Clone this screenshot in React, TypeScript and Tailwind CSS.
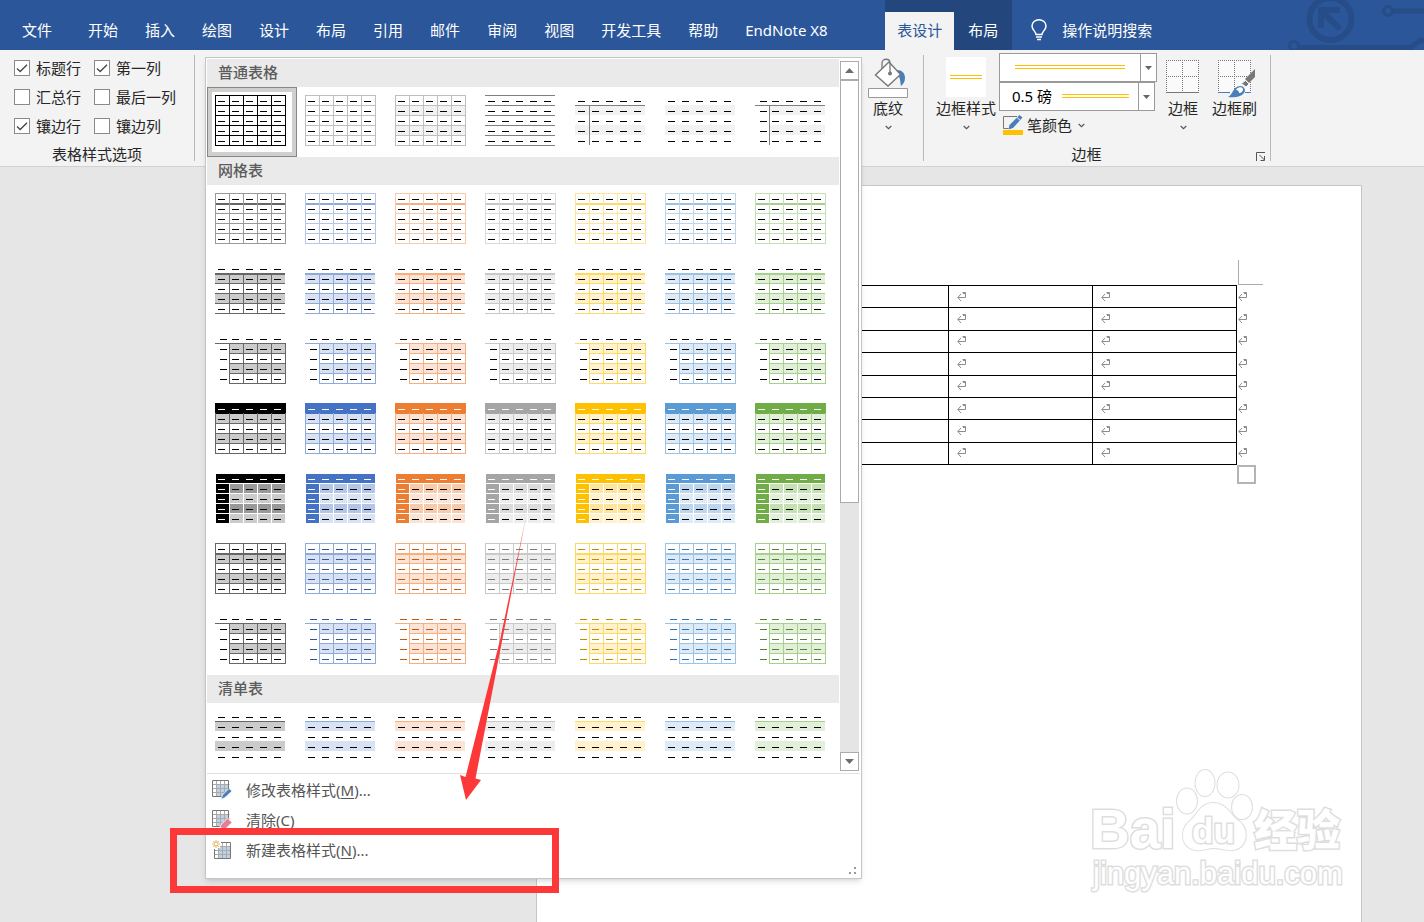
import React from 'react';

type Theme = { base: string; mid: string; light: string; pale: string; dark: string };
type Kind =
	| 'plainGrid'
	| 'plainGray'
	| 'plainBanded'
	| 'plainLines'
	| 'plainFirstCol'
	| 'plainBands'
	| 'plainIndent'
	| 'grid1'
	| 'grid2'
	| 'grid3'
	| 'grid4'
	| 'grid5'
	| 'grid6'
	| 'grid7'
	| 'list1';

const themes: Theme[] = [
	{ base: '#000000', mid: '#666666', light: '#999999', pale: '#cbcbcb', dark: '#000000' },
	{ base: '#4472c4', mid: '#8eaadb', light: '#b4c6e7', pale: '#d9e2f3', dark: '#2f5496' },
	{ base: '#ed7d31', mid: '#f4b083', light: '#f7caac', pale: '#fbe4d5', dark: '#c45911' },
	{ base: '#a5a5a5', mid: '#c9c9c9', light: '#dbdbdb', pale: '#ededed', dark: '#7b7b7b' },
	{ base: '#ffc000', mid: '#ffd966', light: '#ffe599', pale: '#fff2cc', dark: '#bf8f00' },
	{ base: '#5b9bd5', mid: '#9cc2e5', light: '#bdd6ee', pale: '#deeaf6', dark: '#2e74b5' },
	{ base: '#70ad47', mid: '#a8d08d', light: '#c5e0b3', pale: '#e2efd9', dark: '#538135' },
];

const plainKinds: Kind[] = [
	'plainGrid',
	'plainGray',
	'plainBanded',
	'plainLines',
	'plainFirstCol',
	'plainBands',
	'plainIndent',
];
const gridKinds: Kind[] = ['grid1', 'grid2', 'grid3', 'grid4', 'grid5', 'grid6', 'grid7'];
const steps = [0, 1, 2, 3, 4];

const Preview = ({ kind, theme }: { kind: Kind; theme: Theme }) => {
	const shapes: React.ReactElement[] = [];
	const box = (x: number, y: number, w: number, h: number, fill: string) =>
		shapes.push(<rect key={shapes.length} x={x} y={y} width={w} height={h} fill={fill} />);
	const bands = (fill: string, x = 0) => [10, 30].forEach((y) => box(x, y, 70 - x, 10, fill));
	const rows = (ys: number[], fill: string, x = 0, end = 70) => ys.forEach((y) => box(x, y, end - x, 1, fill));
	const cols = (xs: number[], fill: string, y = 0) => xs.forEach((x) => box(x, y, 1, 51 - y, fill));
	const allX = [0, 14, 28, 42, 56, 70];
	const allY = [0, 10, 20, 30, 40, 50];
	const indent = kind === 'plainIndent' || kind === 'grid3' || kind === 'grid7';
	let dash = '#000000';

	switch (kind) {
		case 'plainGrid':
			rows(allY, '#000000');
			cols(allX, '#000000');
			break;
		case 'plainBanded':
		case 'plainGray':
			if (kind === 'plainBanded') bands('#f2f2f2');
			rows(allY, '#bfbfbf');
			cols(allX, '#bfbfbf');
			break;
		case 'plainLines':
			rows(allY, '#7f7f7f');
			break;
		case 'plainBands':
			bands('#f2f2f2');
			break;
		case 'plainFirstCol':
		case 'plainIndent':
			bands('#f2f2f2', indent ? 14 : 0);
			rows([10], '#7f7f7f');
			box(14, 10, 1, 40, '#7f7f7f');
			break;
		case 'grid1':
			rows(allY, theme.light);
			box(0, 10, 70, 2, theme.mid);
			cols(allX, theme.light);
			break;
		case 'grid2':
			bands(theme.pale);
			rows([20, 30, 40, 50], theme.mid);
			box(0, 10, 70, 2, theme.mid);
			[14, 28, 42, 56].forEach((x) => box(x, 10, 1, 40, theme.mid));
			break;
		case 'grid3':
		case 'grid7':
			bands(theme.pale, 14);
			rows([10], theme.mid);
			rows([20, 30, 40, 50], theme.mid, 14);
			cols([14, 28, 42, 56, 70], theme.mid, 10);
			break;
		case 'grid4':
			bands(theme.pale);
			box(0, 0, 71, 11, theme.base);
			rows([20, 30, 40, 50], theme.mid);
			cols(allX, theme.mid, 10);
			break;
		case 'grid5':
			box(1, 1, 69, 9, theme.base);
			[1, 2, 3, 4].forEach((r) => {
				box(1, r * 10 + 1, 13, 9, theme.base);
				[1, 2, 3, 4].forEach((c) =>
					box(c * 14 + 1, r * 10 + 1, 13, 9, r % 2 ? theme.light : theme.pale)
				);
			});
			break;
		case 'grid6':
			bands(theme.pale);
			rows(allY, theme.mid);
			box(0, 10, 70, 2, theme.mid);
			cols(allX, theme.mid);
			break;
		case 'list1':
			bands(theme.pale);
			rows([10], theme.mid);
			break;
	}
	if (kind === 'grid6' || kind === 'grid7') dash = theme.dark;

	steps.forEach((r) =>
		steps.forEach((c) => {
			const white = (kind === 'grid4' && r === 0) || (kind === 'grid5' && (r === 0 || c === 0));
			box(c * 14 + 3 + (indent && c === 0 ? 2 : 0), r * 10 + 6, 7, 1, white ? '#ffffff' : dash);
		})
	);

	return (
		<svg width="71" height="51" viewBox="0 0 71 51" shapeRendering="crispEdges">
			{shapes}
		</svg>
	);
};

const StyleButton = ({ kind, theme, selected }: { kind: Kind; theme: Theme; selected?: boolean }) => (
	<button
		aria-label={kind}
		className={
			selected
				? 'h-[70px] w-[90px] border border-[#868884] bg-[#cfcfcd] p-1'
				: 'h-[70px] w-[90px] p-[5px] hover:bg-gray-200'
		}
	>
		<span className="flex h-full bg-white pt-[3px] pl-[3px]">
			<Preview kind={kind} theme={theme} />
		</span>
	</button>
);

const SectionTitle = ({ children }: { children: string }) => (
	<h2 className="h-7 bg-[#eaeaea] pl-[11px] leading-[26px] font-medium text-[#5c5c5c]">{children}</h2>
);

const Chevron = () => (
	<svg width="7" height="5" viewBox="0 0 7 5" fill="none" stroke="#555" strokeWidth="1.2">
		<path d="M.7 1l2.8 2.6L6.3 1" />
	</svg>
);

const CheckOption = ({ label, checked }: { label: string; checked?: boolean }) => (
	<label className="flex items-center gap-[6px]">
		<span className="relative flex">
			<input
				type="checkbox"
				defaultChecked={checked}
				className="peer h-4 w-4 appearance-none border border-[#8a8a8a] bg-white"
			/>
			<svg
				className="pointer-events-none absolute inset-0 hidden peer-checked:block"
				width="16"
				height="16"
				viewBox="0 0 16 16"
				fill="none"
				stroke="#444"
				strokeWidth="1.3"
			>
				<path d="M3 8.5l3.2 3L13 4.8" />
			</svg>
		</span>
		{label}
	</label>
);

const BucketIcon = () => (
	<svg width="40" height="40" viewBox="0 0 40 40" fill="none">
		<path d="M29 12c5 0 8 3 8 8 0 4-2 6-4 8-1-4 0-8-4-12z" fill="#4a7ebb" />
		<path d="M21 4L32.500 16.500 20 28 7.500 17z" fill="#fff" stroke="#777" strokeWidth="1.4" />
		<path d="M14 11V5c0-5 8-5 8 0v10" stroke="#777" strokeWidth="1.3" />
		<circle cx="22" cy="15.500" r="2" fill="#777" />
		<path d="M.5 30.500h39v9H.5z" fill="#fff" stroke="#999" />
	</svg>
);

const BorderIcon = () => (
	<svg width="34" height="34" viewBox="0 0 34 34" fill="none" shapeRendering="crispEdges">
		<path d="M0 0h33v33H0z" fill="#fafafa" />
		<path d="M0 .5h33M0 16.500h33M.5 0v32M16.500 0v32M32.500 0v32" stroke="#777" strokeDasharray="1 1" />
		<path d="M0 32.500h33" stroke="#777" />
	</svg>
);

const BorderBrushIcon = () => (
	<svg width="38" height="38" viewBox="0 0 38 38" fill="none">
		<path d="M0 0h33v33H0z" fill="#fafafa" />
		<path
			d="M0 .5h33M0 16.500h33M.5 0v32M16.500 0v32M32.500 0v32"
			stroke="#777"
			strokeDasharray="1 1"
			shapeRendering="crispEdges"
		/>
		<path d="M0 32.500h12M27 32.500h6" stroke="#4a7ebb" />
		<path d="M37 9v8l-6 6-4-4z" fill="#777" />
		<path d="M27.500 20.500l3.500 3.500-3 3-4.500-3.500z" fill="#777" stroke="#f3f3f3" />
		<path d="M10 37c5-2 5-11 12-11 5 0 6 5 4 7-3 4-9 5-16 4z" fill="#4a7ebb" />
		<path d="M18 30c1-3 6-4 7-1 0 3-2 4-4 4 0-2-1-3-3-3z" fill="#fff" />
	</svg>
);

const PenColorIcon = () => (
	<svg width="20" height="20" viewBox="0 0 20 20" fill="none">
		<path d="M14 1.500H.5v12h5" stroke="#777" />
		<path d="M16.500 0l3 2.500L10 13l-4.500 1.500 1-4.500z" fill="#4a7ebb" />
		<path d="M14 2.500l3.500 3" stroke="#f3f3f3" />
		<path d="M0 15h20v5H0z" fill="#ffc000" />
	</svg>
);

const GridIcon = ({ variant }: { variant: 'edit' | 'clear' | 'new' }) => (
	<svg width="20" height="20" viewBox="0 0 20 20" fill="none">
		{variant === 'new' ? (
			<>
				<path d="M2.500 2.500h16v16h-16z" fill="#fff" />
				<path d="M6 6h12v12H6z" fill="#bdd0e5" />
				<path d="M2.500 6.500h16M2.500 10.500h16M2.500 14.500h16M6.500 2v16M10.500 2v16M14.500 2v16" stroke="#aaa" />
				<path d="M2.500 9v9.500h16v-16H9" stroke="#777" />
				<path d="M0 0h8v8H0z" fill="#fff" />
				<path d="M4 0v8M0 4h8M1.200 1.200l5.600 5.600M6.800 1.200L1.200 6.800" stroke="#e8bd6c" strokeWidth="1.2" />
				<circle cx="4" cy="4" r="1.200" fill="#fff" />
			</>
		) : (
			<>
				<path d="M.5 .5h17v16H.5z" fill="#fff" />
				<path d="M5 5h11v11H5z" fill="#bdd0e5" />
				<path d="M.5 4.500h17M.5 8.500h17M.5 12.500h17M4.500 0v17M8.500 0v17M12.500 0v17" stroke="#aaa" />
				<path d="M10 16.500H.5V.5h16V10" stroke="#777" />
			</>
		)}
		{variant === 'edit' && (
			<path d="M17 8.500l3 2.500-7 6.500-4 2 1.500-4.500z" fill="#4a7ebb" stroke="#fff" strokeWidth=".7" />
		)}
		{variant === 'clear' && (
			<path d="M15.500 8l4.500 4.500-6 6h-4.500L8 16z" fill="#e67f96" stroke="#fff" strokeWidth=".8" />
		)}
	</svg>
);

const MenuItem = ({ icon, text, hotkey }: { icon: 'edit' | 'clear' | 'new'; text: string; hotkey: string }) => (
	<button className="flex h-[30px] w-full items-center gap-[14px] pl-[5px] text-left hover:bg-gray-200">
		<GridIcon variant={icon} />
		<span>
			{text}(<u className="underline-offset-2">{hotkey}</u>){icon === 'clear' ? '' : '...'}
		</span>
	</button>
);

const StyleMenu = () => (
	<div className="absolute top-[7px] left-[10px] z-10 w-[657px] border border-[#c6c6c6] bg-white p-px text-[#555555] shadow-md">
		<div className="flex justify-between">
			<div className="w-[632px]">
				<SectionTitle>普通表格</SectionTitle>
				<div className="flex">
					{plainKinds.map((kind, i) => (
						<StyleButton key={kind} kind={kind} theme={themes[0]} selected={i === 0} />
					))}
				</div>
				<SectionTitle>网格表</SectionTitle>
				<div className="grid grid-cols-[repeat(7,90px)]">
					{gridKinds.map((kind) =>
						themes.map((theme) => <StyleButton key={kind + theme.base} kind={kind} theme={theme} />)
					)}
				</div>
				<SectionTitle>清单表</SectionTitle>
				<div className="flex">
					{themes.map((theme) => (
						<StyleButton key={theme.base} kind="list1" theme={theme} />
					))}
				</div>
			</div>
			<div className="mt-[2px] mr-px mb-[2px] flex w-[19px] flex-col bg-[#e5e5e5]">
				<button aria-label="向上" className="flex h-[19px] items-center justify-center border border-[#ababab] bg-white">
					<svg width="9" height="5" viewBox="0 0 9 5" fill="#6e6e6e">
						<path d="M0 5l4.500-5L9 5z" />
					</svg>
				</button>
				<div className="h-[423px] border border-[#ababab] bg-white" />
				<button
					aria-label="向下"
					className="mt-auto flex h-[19px] items-center justify-center border border-[#ababab] bg-white"
				>
					<svg width="9" height="5" viewBox="0 0 9 5" fill="#6e6e6e">
						<path d="M0 0l4.500 5L9 0z" />
					</svg>
				</button>
			</div>
		</div>
		<div className="border-t border-[#e1e1e1] pt-px">
			<MenuItem icon="edit" text="修改表格样式" hotkey="M" />
			<MenuItem icon="clear" text="清除" hotkey="C" />
			<MenuItem icon="new" text="新建表格样式" hotkey="N" />
		</div>
		<div className="flex h-3 items-end justify-end pr-1 pb-[3px]">
			<svg width="7" height="7" viewBox="0 0 7 7" fill="#999">
				<path d="M5 0h2v2H5zM0 5h2v2H0zM5 5h2v2H5z" />
			</svg>
		</div>
		{/* red frame and arrow pointing at the last command */}
		<svg
			className="pointer-events-none absolute top-[452px] left-[-36px] max-w-none"
			width="390"
			height="384"
			viewBox="170 510 390 384"
			fill="#fc3838"
		>
			<path d="M526 517L475.500 778.500 481 780 466 800 460 775 465.500 777 500 640z" />
			<path d="M173.500 831.500h382v58h-382z" fill="none" stroke="#fc3838" strokeWidth="7" />
		</svg>
	</div>
);

const tabs = ['开始', '插入', '绘图', '设计', '布局', '引用', '邮件', '审阅', '视图', '开发工具', '帮助'];

const TabBar = () => (
	<header className="relative flex h-[50px] items-end bg-[#2b579a] text-white">
		<svg className="absolute top-0 right-0" width="140" height="50" viewBox="1284 0 140 50" fill="none" stroke="#264d87">
			<circle cx="1330.500" cy="19" r="21" strokeWidth="6" />
			<path d="M1340 29l-18-18M1321 28V10h19" strokeWidth="6" />
			<circle cx="1388" cy="11" r="4.500" strokeWidth="3" />
			<path d="M1393 11h31" strokeWidth="5" />
			<circle cx="1294" cy="46" r="4.500" strokeWidth="3" />
			<path d="M1299 47.500h112l9-7h4" strokeWidth="5" />
		</svg>
		<nav className="flex h-[38px] items-center pb-[2px]">
			<button className="ml-[22px]">文件</button>
			<div className="ml-9 flex gap-[27px]">
				{tabs.map((tab) => (
					<button key={tab}>{tab}</button>
				))}
				<button className="w-[88px] text-left whitespace-nowrap">EndNote X8</button>
			</div>
		</nav>
		<div className="relative ml-[52px] flex h-full items-end bg-[#23477d]">
			<button className="h-[38px] bg-[#f3f3f3] px-3 pb-[2px] text-[#2b579a]">表设计</button>
			<button className="h-[38px] px-[14px] pb-[2px]">布局</button>
		</div>
		<button className="relative ml-[18px] flex h-[38px] items-center gap-[14px] pb-[2px]">
			<svg width="18" height="22" viewBox="0 0 18 22" fill="none" stroke="#fff" strokeWidth="1.5">
				<path d="M6 15.500c0-3-4-4.500-4-8.500a7 6.300 0 0 1 14 0c0 4-4 5.500-4 8.500z" />
				<path d="M6 18h6M7 20.500h4" />
			</svg>
			操作说明搜索
		</button>
	</header>
);

const Separator = () => <div className="mt-[5px] h-[106px] w-px bg-[#b8b8b8]" />;

const ComboArrow = () => (
	<span className="pointer-events-none absolute top-0 right-0 flex h-full w-[17px] items-center justify-center border border-[#999]">
		<svg width="7" height="4" viewBox="0 0 7 4" fill="#666">
			<path d="M0 0h7L3.500 4z" />
		</svg>
	</span>
);

const Ribbon = () => (
	<div className="relative flex h-[117px] border-b border-[#d2d2d2] bg-[#f3f3f3] text-[#262626]">
		<section className="w-[194px]">
			<div className="grid h-[94px] grid-cols-[80px_auto] content-start gap-y-[7px] pt-[7px] pl-[14px] leading-[22px]">
				<CheckOption label="标题行" checked />
				<CheckOption label="第一列" checked />
				<CheckOption label="汇总行" />
				<CheckOption label="最后一列" />
				<CheckOption label="镶边行" checked />
				<CheckOption label="镶边列" />
			</div>
			<h3 className="text-center leading-5">表格样式选项</h3>
		</section>
		<Separator />
		<section className="relative w-[667px]">
			<StyleMenu />
		</section>
		<section className="pt-2 pr-[15px] pl-[6px]">
			<button className="flex w-10 flex-col items-center">
				<BucketIcon />
				<span className="leading-5">底纹</span>
				<span className="flex h-[18px] items-center">
					<Chevron />
				</span>
			</button>
		</section>
		<Separator />
		<section className="w-[346px]">
			<div className="flex h-[94px] items-start pl-3">
				<button className="mt-[7px] flex w-[60px] flex-col items-center">
					<span className="flex h-10 w-10 items-center justify-center bg-white">
						<span className="h-1 w-8 border-y border-[#ffc000]" />
					</span>
					<span className="mt-px leading-5">边框样式</span>
					<span className="flex h-[18px] items-center">
						<Chevron />
					</span>
				</button>
				<div className="mt-[3px] ml-[3px] w-[158px]">
					<div className="relative h-[29px]">
						<select aria-label="笔样式" className="h-full w-full appearance-none border border-[#999] bg-white" />
						<span className="pointer-events-none absolute top-3 left-4 h-1 w-[110px] border-y border-[#ffc000]" />
						<ComboArrow />
					</div>
					<div className="relative h-[29px] w-[156px]">
						<select
							aria-label="笔划粗细"
							className="h-full w-full appearance-none border border-[#999] bg-white pl-3 text-black"
						>
							<option>0.5 磅</option>
						</select>
						<span className="pointer-events-none absolute top-3 left-[63px] h-1 w-[67px] border-y border-[#ffc000]" />
						<ComboArrow />
					</div>
					<button className="mt-[3px] ml-1 flex items-center gap-1 leading-[22px]">
						<PenColorIcon />
						笔颜色
						<span className="ml-[2px]">
							<Chevron />
						</span>
					</button>
				</div>
				<button className="mt-[10px] ml-[9px] flex w-[34px] flex-col items-center">
					<BorderIcon />
					<span className="mt-1 leading-5">边框</span>
					<span className="flex h-[18px] items-center">
						<Chevron />
					</span>
				</button>
				<button className="mt-[10px] ml-3 flex w-[45px] flex-col items-center">
					<span className="pl-1">
						<BorderBrushIcon />
					</span>
					<span className="leading-5">边框刷</span>
				</button>
			</div>
			<div className="flex items-center">
				<h3 className="flex-1 text-center leading-5">边框</h3>
				<button aria-label="边框设置" className="mr-1 ml-[7px] pt-1">
					<svg width="10" height="9" viewBox="0 0 10 9" fill="none" stroke="#555">
						<path d="M.5 9V.5H9M3.500 3l5 5M8.500 4v4.500H4.500" />
					</svg>
				</button>
			</div>
		</section>
		<Separator />
	</div>
);

const ReturnMark = () => (
	<svg className="mb-[2px]" width="9" height="10" viewBox="0 0 9 10" fill="none" stroke="#8c8c8c">
		<path d="M5.500 1.500h3v5H1M4 3L.8 6.500 4 10M6 2.500h2" />
	</svg>
);

const Watermark = () => (
	<svg
		className="mt-auto mr-[11px] mb-[27px] self-end"
		width="264"
		height="130"
		viewBox="1088 765 264 130"
		fill="#fff"
		stroke="#dedede"
		strokeWidth="2"
		paintOrder="stroke"
	>
		<ellipse cx="1189" cy="801" rx="10" ry="12.500" />
		<ellipse cx="1207" cy="783" rx="9.500" ry="13" />
		<ellipse cx="1230" cy="785" rx="10.500" ry="12.500" />
		<ellipse cx="1244" cy="807" rx="10" ry="12" />
		<path d="M1215 803c-13 0-16 13-24 19-9 7-9 26 7 28 8 1 11-2 18-2s11 3 19 2c15-2 16-20 7-28-9-6-13-19-27-19z" />
		<g strokeWidth="3" fontFamily="'Liberation Sans', sans-serif" fontWeight="700">
			<text x="1092" y="848" fontSize="55">
				Bai
			</text>
			<text x="1194" y="843" fontSize="35">
				du
			</text>
			<text x="1256" y="846" fontSize="43" fontFamily="'Noto Sans CJK SC', sans-serif" fontWeight="900">
				经验
			</text>
		</g>
		<text x="1095" y="884" fontSize="31" fontFamily="'Liberation Sans', sans-serif" strokeWidth="3">
			jingyan.baidu.com
		</text>
	</svg>
);

const docRows = [1, 2, 3, 4, 5, 6, 7, 8];

const Document = () => (
	<main className="flex flex-1 bg-[#e6e6e6] pt-[18px] pr-[62px] pl-[536px]">
		<article className="flex flex-1 flex-col border border-b-0 border-[#c6c6c6] bg-white pt-[74px]">
			<div className="mr-[98px] h-[25px] w-[25px] self-end border-b border-l border-[#ababab]" />
			<div className="pr-[113px] pl-[123px]">
				<table className="h-[180px] w-full table-fixed border-collapse">
					<colgroup>
						<col />
						<col />
						<col />
						<col />
						<col className="w-3" />
					</colgroup>
					<tbody>
						{docRows.map((row) => (
							<tr key={row}>
								{[0, 1, 2, 3].map((col) => (
									<td key={col} className="border border-black p-0 pl-2">
										<ReturnMark />
									</td>
								))}
								<td className="p-0 pl-px">
									<ReturnMark />
								</td>
							</tr>
						))}
					</tbody>
				</table>
			</div>
			<div className="mr-[105px] h-[19px] w-[19px] self-end border-2 border-[#b4b4b4]" />
			<Watermark />
		</article>
	</main>
);

const App = () => {
	return (
		<div className="flex min-h-screen flex-col font-['Noto_Sans','Noto_Sans_CJK_SC',sans-serif] text-[15px]">
			<TabBar />
			<Ribbon />
			<Document />
		</div>
	);
};

export default App;
